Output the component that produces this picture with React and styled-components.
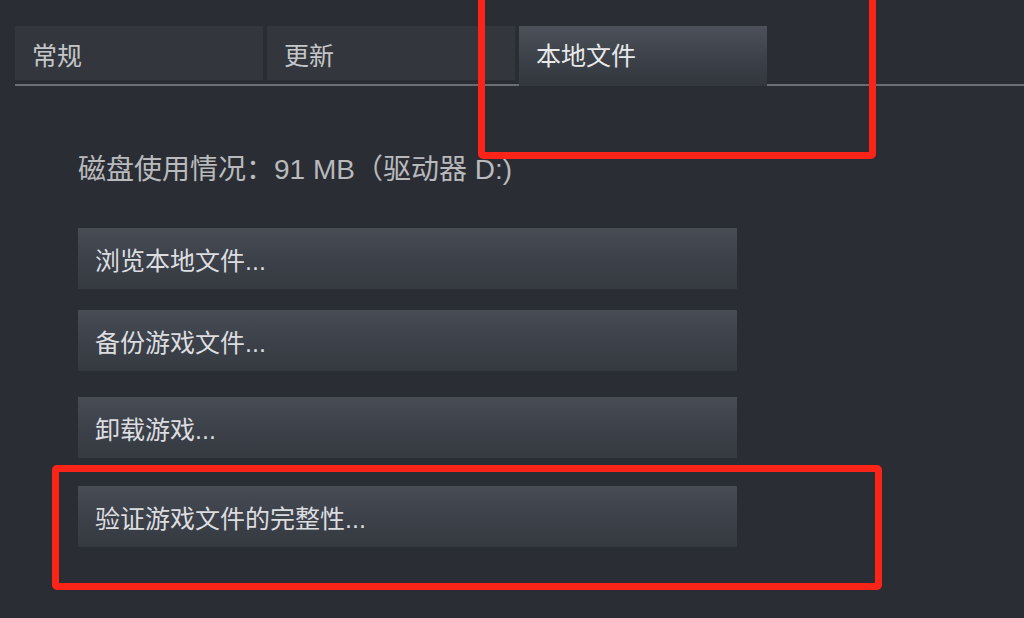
import React from 'react';
import styled, { createGlobalStyle } from 'styled-components';

const GlobalStyle = createGlobalStyle`
  html, body {
    margin: 0;
    padding: 0;
    background: #2a2d33;
  }
  body {
    font-family: "Liberation Sans", "Noto Sans CJK SC", sans-serif;
  }
`;

const Page = styled.div`
  position: relative;
  width: 1024px;
  height: 618px;
  overflow: hidden;
  background: #2a2d33;
  padding-top: 26px;
  box-sizing: border-box;
`;

const TabBar = styled.div`
  display: flex;
  align-items: flex-start;
  gap: 4px;
  height: 58px;
  margin-left: 15px;
  border-bottom: 2px solid #6a6d72;
`;

const Tab = styled.div`
  width: 248px;
  height: ${({ $active }) => ($active ? '60px' : '54px')};
  display: flex;
  align-items: center;
  padding: ${({ $active }) => ($active ? '0 0 4px 17px' : '1px 0 0 17px')};
  box-sizing: border-box;
  font-size: 25px;
  color: ${({ $active }) => ($active ? '#e8e9ea' : '#c4c6c9')};
  background: ${({ $active }) =>
    $active ? 'linear-gradient(180deg, #4c515a 0%, #3b3f47 60%, #32363d 100%)' : '#33363c'};
`;

const Content = styled.div`
  padding: 67px 0 0 78px;
`;

const DiskUsage = styled.div`
  font-size: 28px;
  line-height: 34px;
  color: #b8babd;
  margin-bottom: 41px;
`;

const ActionList = styled.div`
  display: flex;
  flex-direction: column;
`;

const ActionButton = styled.div`
  width: 659px;
  height: 61px;
  margin-top: ${({ $space }) => $space}px;
  display: flex;
  align-items: center;
  padding-left: 17px;
  box-sizing: border-box;
  font-size: 25px;
  color: #dcdde0;
  background: linear-gradient(180deg, #474c55 0%, #3c4048 55%, #353940 100%);
`;

const Marker = styled.div`
  position: absolute;
  box-sizing: border-box;
  border: 7px solid #fb2418;
  border-radius: 5px;
  left: ${({ $x }) => $x}px;
  top: ${({ $y }) => $y}px;
  width: ${({ $w }) => $w}px;
  height: ${({ $h }) => $h}px;
  pointer-events: none;
`;

const tabs = [
  { label: '常规' },
  { label: '更新' },
  { label: '本地文件', active: true },
];

const actions = [
  { label: '浏览本地文件...', space: 0 },
  { label: '备份游戏文件...', space: 21 },
  { label: '卸载游戏...', space: 26 },
  { label: '验证游戏文件的完整性...', space: 28 },
];

const App = () => (
  <>
    <GlobalStyle />
    <Page>
      <TabBar>
        {tabs.map(tab => (
          <Tab key={tab.label} $active={tab.active}>{tab.label}</Tab>
        ))}
      </TabBar>
      <Content>
        <DiskUsage>磁盘使用情况：91 MB（驱动器 D:)</DiskUsage>
        <ActionList>
          {actions.map(action => (
            <ActionButton key={action.label} $space={action.space}>{action.label}</ActionButton>
          ))}
        </ActionList>
      </Content>
      <Marker $x={478} $y={-12} $w={398} $h={171} />
      <Marker $x={52} $y={465} $w={830} $h={125} />
    </Page>
  </>
);

export default App;
